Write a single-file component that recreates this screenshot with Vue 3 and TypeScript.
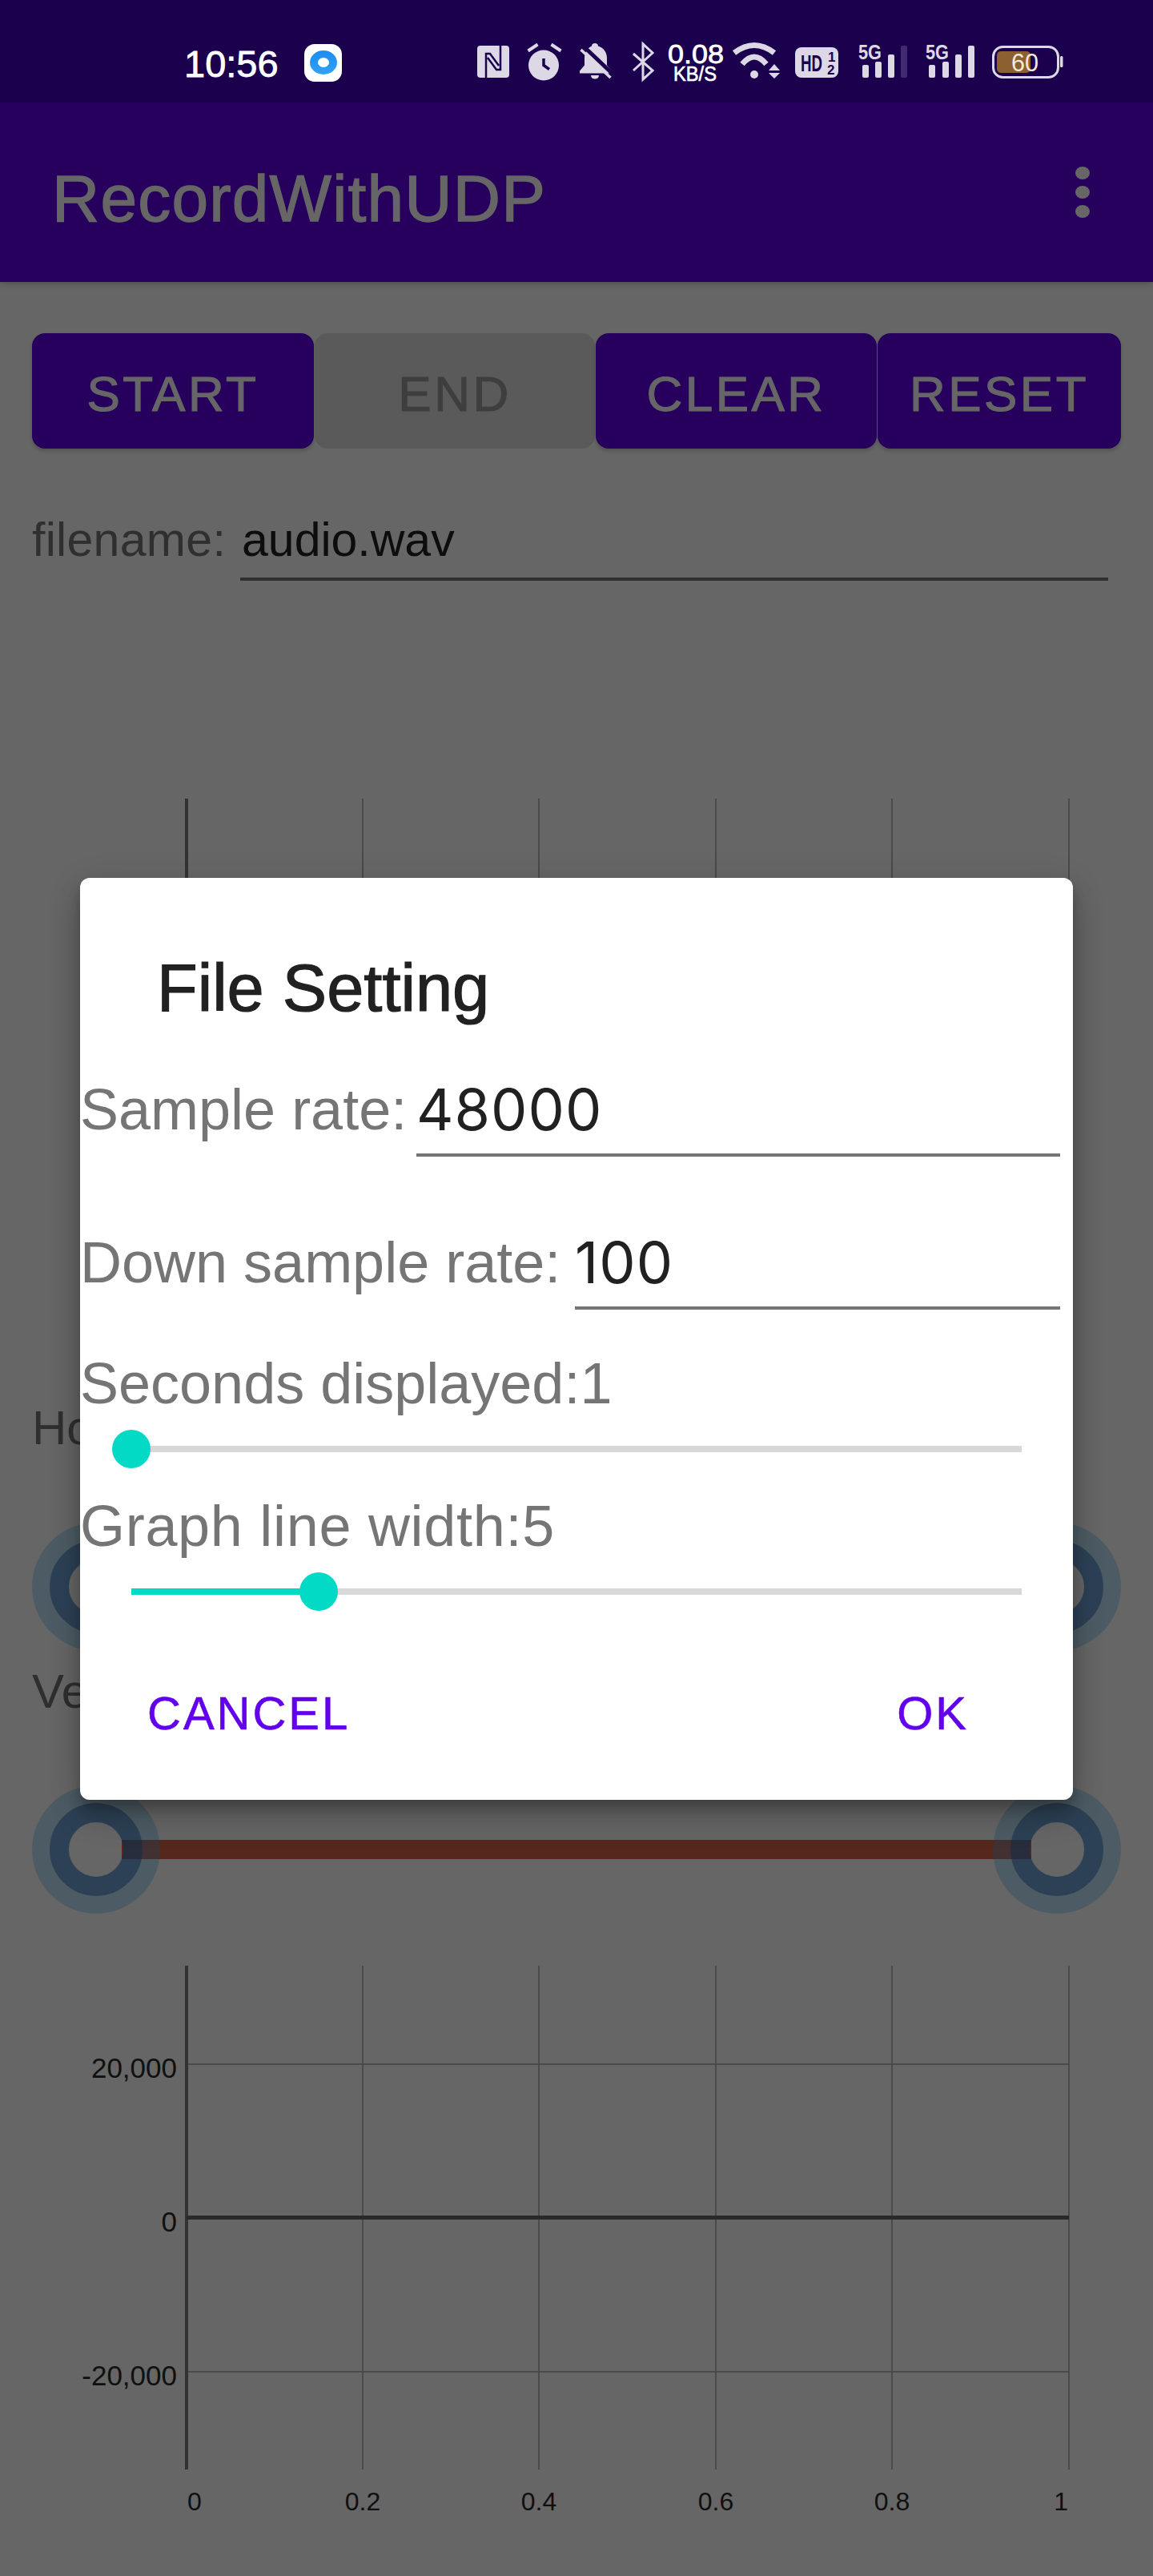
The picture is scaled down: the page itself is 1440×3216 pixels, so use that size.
<template>
  <div class="screen">
    <div class="status-bar">
      <span class="clock">10:56</span>
      <svg class="app-dot" viewBox="0 0 47 47" width="47" height="47">
        <defs>
          <linearGradient id="dotBlue" x1="0" y1="0" x2="0" y2="1">
            <stop offset="0" stop-color="#1f8bf0" />
            <stop offset="1" stop-color="#2ea3f7" />
          </linearGradient>
        </defs>
        <rect width="47" height="47" rx="13" fill="#fff" />
        <ellipse cx="24" cy="23" rx="17" ry="15" fill="url(#dotBlue)" />
        <ellipse cx="24" cy="23" rx="7" ry="6" fill="#fff" />
      </svg>
      <svg class="status-icons" viewBox="590 45 742 65" width="742" height="65">
        <!-- nfc -->
        <rect x="596" y="57" width="40" height="40" rx="4" fill="#dcd8e6" />
        <path d="M607 97V67h5l11 15M625 57v30h-5L609 72" fill="none" stroke="#1b004d" stroke-width="2.5" />
        <!-- alarm -->
        <circle cx="679" cy="81.5" r="19" fill="#dcd8e6" />
        <path d="M659.5 63.5l12-8M688.5 55.5l12 8" stroke="#dcd8e6" stroke-width="4" fill="none" />
        <path d="M679 73v8.500l7 5" stroke="#1b004d" stroke-width="3.500" fill="none" />
        <!-- muted bell -->
        <path d="M743 54c2.500 0 4 1.500 4 3.500c7 2 11 8 11 15v9l6 7v3H724v-3l6-7v-9c0-7 4-13 9-15c0-2 1.500-3.500 4-3.500z" fill="#dcd8e6" />
        <path d="M738 94h10c0 3-2 4.500-5 4.500s-5-1.500-5-4.500z" fill="#dcd8e6" />
        <path d="M729 58l38 36" stroke="#1b004d" stroke-width="5" />
        <path d="M725.500 62l37 35" stroke="#dcd8e6" stroke-width="3.500" />
        <!-- bluetooth -->
        <path d="M791 67l24 21-12 11V55l12 11-24 22" fill="none" stroke="#dcd8e6" stroke-width="3" />
        <!-- traffic -->
        <text class="st-speed" x="834" y="79" textLength="70" lengthAdjust="spacingAndGlyphs">0.08</text>
        <text class="st-unit" x="841" y="101" textLength="54" lengthAdjust="spacingAndGlyphs">KB/S</text>
        <!-- wifi -->
        <path d="M917 66Q942 47 967 66M927 80Q942 62 957 80" fill="none" stroke="#dcd8e6" stroke-width="7" />
        <circle cx="942" cy="93" r="5" fill="#dcd8e6" />
        <path d="M967 80l7 8h-14zM967 98l7-7h-14z" fill="#dcd8e6" />
        <!-- hd -->
        <rect x="993" y="59" width="54" height="38" rx="8" fill="#dcd8e6" />
        <text class="st-hd" x="1000" y="89" textLength="27" lengthAdjust="spacingAndGlyphs">HD</text>
        <text class="st-frac" x="1034" y="77">1</text>
        <text class="st-frac" x="1033" y="93">2</text>
        <!-- signal 1 -->
        <text class="st-5g" x="1072" y="74" textLength="29" lengthAdjust="spacingAndGlyphs">5G</text>
        <rect x="1077" y="81" width="8" height="16" rx="2" fill="#dcd8e6" />
        <rect x="1093" y="77" width="8" height="20" rx="2" fill="#dcd8e6" />
        <rect x="1109" y="68" width="8" height="29" rx="2" fill="#dcd8e6" />
        <rect x="1125" y="57" width="8" height="40" rx="2" fill="#402a70" />
        <!-- signal 2 -->
        <text class="st-5g" x="1156" y="74" textLength="29" lengthAdjust="spacingAndGlyphs">5G</text>
        <rect x="1160" y="81" width="8" height="16" rx="2" fill="#dcd8e6" />
        <rect x="1177" y="77" width="8" height="20" rx="2" fill="#dcd8e6" />
        <rect x="1193" y="68" width="8" height="29" rx="2" fill="#dcd8e6" />
        <rect x="1209" y="57" width="8" height="40" rx="2" fill="#dcd8e6" />
        <!-- battery -->
        <rect x="1240.500" y="58.500" width="81" height="38" rx="12" fill="none" stroke="#dcd8e6" stroke-width="3" />
        <rect x="1245" y="64" width="42" height="27" rx="5" fill="#8d6030" />
        <rect x="1324" y="70" width="3.500" height="14" rx="1.500" fill="#dcd8e6" />
        <text class="st-batt" x="1263" y="89" textLength="34" lengthAdjust="spacingAndGlyphs">60</text>
      </svg>
    </div>

    <header class="app-bar">
      <span class="app-title">RecordWithUDP</span>
      <div class="kebab"><i></i><i></i><i></i></div>
    </header>

    <div class="btn-row">
      <button class="btn">START</button>
      <button class="btn off">END</button>
      <button class="btn">CLEAR</button>
      <button class="btn">RESET</button>
    </div>

    <div class="file-row">
      <span class="file-label">filename:</span>
      <span class="file-input">audio.wav</span>
    </div>

    <svg class="chart chart-top" viewBox="0 0 1440 730" width="1440" height="730">
      <line v-for="x in gridX" :key="x" :x1="x" :x2="x" y1="34" y2="663" class="grid" />
      <line v-for="t in yTicks" :key="t.label" x1="233" x2="1335" :y1="t.y" :y2="t.y" class="grid" />
      <line x1="233" x2="233" y1="34" y2="663" class="axis" />
      <line x1="233" x2="1335" y1="348.500" y2="348.500" class="zero" />
      <text v-for="t in yTicks" :key="t.label" x="221" :y="t.y + 17" text-anchor="end" class="tick tick-y">{{ t.label }}</text>
      <text v-for="t in xTicks" :key="t.label" :x="t.x" y="714" :text-anchor="t.anchor" class="tick">{{ t.label }}</text>
    </svg>

    <div class="range-label first">Horizontal</div>
    <div class="range">
      <div class="range-track"></div>
      <div class="handle left"><div class="handle-ring"></div></div>
      <div class="handle right"><div class="handle-ring"></div></div>
    </div>
    <div class="range-label second">Vertical</div>
    <div class="range">
      <div class="range-track"></div>
      <div class="handle left"><div class="handle-ring"></div></div>
      <div class="handle right"><div class="handle-ring"></div></div>
    </div>

    <svg class="chart chart-bottom" viewBox="0 0 1440 730" width="1440" height="730">
      <line v-for="x in gridX" :key="x" :x1="x" :x2="x" y1="34" y2="663" class="grid" />
      <line v-for="t in yTicks" :key="t.label" x1="233" x2="1335" :y1="t.y" :y2="t.y" class="grid" />
      <line x1="233" x2="233" y1="34" y2="663" class="axis" />
      <line x1="233" x2="1335" y1="348.500" y2="348.500" class="zero" />
      <text v-for="t in yTicks" :key="t.label" x="221" :y="t.y + 17" text-anchor="end" class="tick tick-y">{{ t.label }}</text>
      <text v-for="t in xTicks" :key="t.label" :x="t.x" y="714" :text-anchor="t.anchor" class="tick">{{ t.label }}</text>
    </svg>

    <div class="scrim"></div>

    <div class="dialog">
      <div class="dialog-title">File Setting</div>
      <div class="field field-rate">
        <span class="field-label">Sample rate:</span>
        <span class="field-input">48000</span>
      </div>
      <div class="field field-down">
        <span class="field-label">Down sample rate:</span>
        <span class="field-input">100</span>
      </div>
      <template v-for="s in sliders" :key="s.label">
        <div class="slider-label" :class="s.cls">{{ s.label }}:{{ s.value }}</div>
        <div class="slider" :class="s.cls">
          <div class="slider-rail">
            <div class="slider-fill" :style="{ width: pct(s) + '%' }"></div>
            <div class="slider-thumb" :style="{ left: pct(s) + '%' }"></div>
          </div>
        </div>
      </template>
      <div class="dialog-actions">
        <span class="action">CANCEL</span>
        <span class="action">OK</span>
      </div>
    </div>
  </div>
</template>

<script setup lang="ts">
interface SliderItem {
  label: string;
  value: number;
  min: number;
  max: number;
  cls: string;
}

const gridX = [453, 673, 894, 1114, 1335];

const yTicks = [
  { label: '20,000', y: 157 },
  { label: '0', y: 348.5 },
  { label: '-20,000', y: 541 },
];

const xTicks = [
  { label: '0', x: 243, anchor: 'middle' },
  { label: '0.2', x: 453, anchor: 'middle' },
  { label: '0.4', x: 673, anchor: 'middle' },
  { label: '0.6', x: 894, anchor: 'middle' },
  { label: '0.8', x: 1114, anchor: 'middle' },
  { label: '1', x: 1334, anchor: 'end' },
];

const sliders: SliderItem[] = [
  { label: 'Seconds displayed', value: 1, min: 1, max: 20, cls: 'one' },
  { label: 'Graph line width', value: 5, min: 1, max: 20, cls: 'two' },
];

const pct = (s: SliderItem) => ((s.value - s.min) / (s.max - s.min)) * 100;
</script>

<style>
html,
body {
  margin: 0;
  background: #fff;
}
</style>

<style scoped>
.screen {
  position: relative;
  width: 1440px;
  height: 3216px;
  overflow: hidden;
  background: #fff;
  font-family: "Liberation Sans", Arial, sans-serif;
}

.status-bar {
  position: relative;
  z-index: 3;
  display: flex;
  align-items: flex-start;
  box-sizing: border-box;
  height: 128px;
  padding: 45px 0 0 230px;
  background: #1b004d;
}

.clock {
  margin-top: 7px;
  width: 117px;
  font-size: 47px;
  line-height: 56px;
  color: #fff;
  -webkit-text-stroke: 0.8px #fff;
}

.app-dot {
  margin: 10px 0 0 33px;
}

.status-icons {
  margin-left: 163px;
}

.st-speed,
.st-unit,
.st-hd,
.st-frac,
.st-5g,
.st-batt {
  font-family: "Liberation Sans", Arial, sans-serif;
}

.st-speed {
  font-size: 33px;
  fill: #fff;
  stroke: #fff;
  stroke-width: 0.8px;
}

.st-unit {
  font-size: 25px;
  fill: #fff;
  stroke: #fff;
  stroke-width: 0.6px;
}

.st-hd {
  font-size: 29px;
  font-weight: 700;
  fill: #1b004d;
}

.st-frac {
  font-size: 17px;
  font-weight: 700;
  fill: #1b004d;
}

.st-5g {
  font-size: 26px;
  font-weight: 700;
  fill: #dcd8e6;
}

.st-batt {
  font-size: 32px;
  fill: #f2e8dc;
}

.app-bar {
  display: flex;
  align-items: center;
  box-sizing: border-box;
  height: 224px;
  padding-left: 65px;
  background: #6000e6;
  box-shadow: 0 2px 8px rgba(0, 0, 0, 0.25);
}

.app-title {
  padding-top: 16px;
  font-size: 82px;
  letter-spacing: 1.2px;
  color: #fff;
  -webkit-text-stroke: 1.3px #fff;
}

.kebab {
  display: flex;
  flex-direction: column;
  gap: 8px;
  margin-left: auto;
  margin-right: 79px;
}

.kebab i {
  display: block;
  width: 18px;
  height: 16px;
  border-radius: 50%;
  background: #fff;
}

.btn-row {
  display: grid;
  grid-template-columns: 352px 350px 351px 1fr;
  gap: 1px;
  margin: 64px 40px 0;
}

.btn {
  height: 144px;
  padding: 7px 0 0;
  border: 0;
  border-radius: 16px;
  background: #6000e6;
  font-family: inherit;
  font-size: 62px;
  letter-spacing: 3.5px;
  color: #fff;
  -webkit-text-stroke: 1.1px #fff;
  box-shadow: 0 3px 5px rgba(0, 0, 0, 0.2);
}

.btn.off {
  background: #e0e0e0;
  color: #9c9c9c;
  -webkit-text-stroke: 1.1px #9c9c9c;
  box-shadow: none;
}

.file-row {
  display: flex;
  align-items: flex-start;
  margin: 74px 56px 0 40px;
  font-size: 59px;
  line-height: 80px;
}

.file-label {
  width: 260px;
  letter-spacing: 0.3px;
  color: #757575;
}

.file-input {
  flex: 1;
  padding: 0 0 7px 2px;
  border-bottom: 4px solid #757575;
  color: #212121;
}

.chart {
  display: block;
}

.chart-top {
  margin-top: 238px;
}

.chart-bottom {
  margin-top: 31px;
}

.chart text {
  font-family: "Liberation Sans", Arial, sans-serif;
}

.grid {
  stroke: #b8b8b8;
  stroke-width: 2;
}

.axis {
  stroke: #808080;
  stroke-width: 4;
}

.zero {
  stroke: #666;
  stroke-width: 5;
}

.tick {
  font-size: 32px;
  fill: #2a2a2a;
}

.tick-y {
  font-size: 35px;
}

.range-label {
  padding-left: 40px;
  font-size: 60px;
  line-height: 80px;
  color: #757575;
}

.range-label.first {
  margin: 50px 0 78px;
}

.range-label.second {
  margin: 11px 0 77px;
}

.range {
  position: relative;
  display: flex;
  align-items: center;
  height: 160px;
  padding: 0 152px;
}

.range-track {
  flex: 1;
  height: 24px;
  background: #d86249;
}

.handle {
  position: absolute;
  top: 0;
  box-sizing: border-box;
  width: 160px;
  height: 160px;
  border: 22.5px solid rgba(60, 180, 240, 0.32);
  border-radius: 50%;
}

.handle.left {
  left: 40px;
}

.handle.right {
  right: 40px;
}

.handle-ring {
  box-sizing: border-box;
  width: 100%;
  height: 100%;
  border: 24.5px solid rgba(45, 120, 195, 0.68);
  border-radius: 50%;
}

.scrim {
  position: absolute;
  inset: 128px 0 0;
  z-index: 1;
  background: rgba(0, 0, 0, 0.6);
}

.dialog {
  position: absolute;
  left: 100px;
  top: 1096px;
  z-index: 2;
  box-sizing: border-box;
  width: 1240px;
  height: 1151px;
  padding-top: 88px;
  border-radius: 12px;
  background: #fff;
  box-shadow: 0 24px 38px rgba(0, 0, 0, 0.14), 0 9px 46px rgba(0, 0, 0, 0.12), 0 11px 15px rgba(0, 0, 0, 0.2);
}

.dialog-title {
  padding-left: 96px;
  font-size: 83px;
  line-height: 100px;
  color: #212121;
  -webkit-text-stroke: 1.2px #212121;
}

.field {
  display: flex;
  align-items: flex-start;
  padding-right: 16px;
  font-size: 72px;
  line-height: 90px;
}

.field-rate {
  margin-top: 56px;
}

.field-down {
  margin-top: 87px;
}

.field-rate .field-label {
  width: 420px;
}

.field-down .field-label {
  width: 618px;
}

.field-label {
  color: #757575;
}

.field-input {
  flex: 1;
  padding: 0 0 10px;
  border-bottom: 4px solid #757575;
  font-family: Inter, "Liberation Sans", sans-serif;
  letter-spacing: 1px;
  color: #212121;
}

.slider-label {
  font-size: 72px;
  line-height: 90px;
  color: #757575;
}

.slider-label.one {
  margin-top: 47px;
}

.slider-label.two {
  margin-top: 27px;
  letter-spacing: 0.7px;
}

.slider {
  display: flex;
  align-items: center;
  height: 48px;
  padding: 0 64px;
}

.slider.one {
  margin-top: 13px;
}

.slider.two {
  margin-top: 13px;
}

.slider-rail {
  position: relative;
  flex: 1;
  height: 8px;
  background: #d8d8d8;
}

.slider-fill {
  height: 100%;
  background: #03dac5;
}

.slider-thumb {
  position: absolute;
  top: 50%;
  width: 48px;
  height: 48px;
  border-radius: 50%;
  background: #03dac5;
  transform: translate(-50%, -50%);
}

.dialog-actions {
  display: flex;
  justify-content: space-between;
  margin-top: 92px;
  padding: 0 130px 0 84px;
}

.action {
  font-size: 58px;
  line-height: 72px;
  letter-spacing: 3px;
  color: #6200ee;
  -webkit-text-stroke: 0.6px #6200ee;
}
</style>
